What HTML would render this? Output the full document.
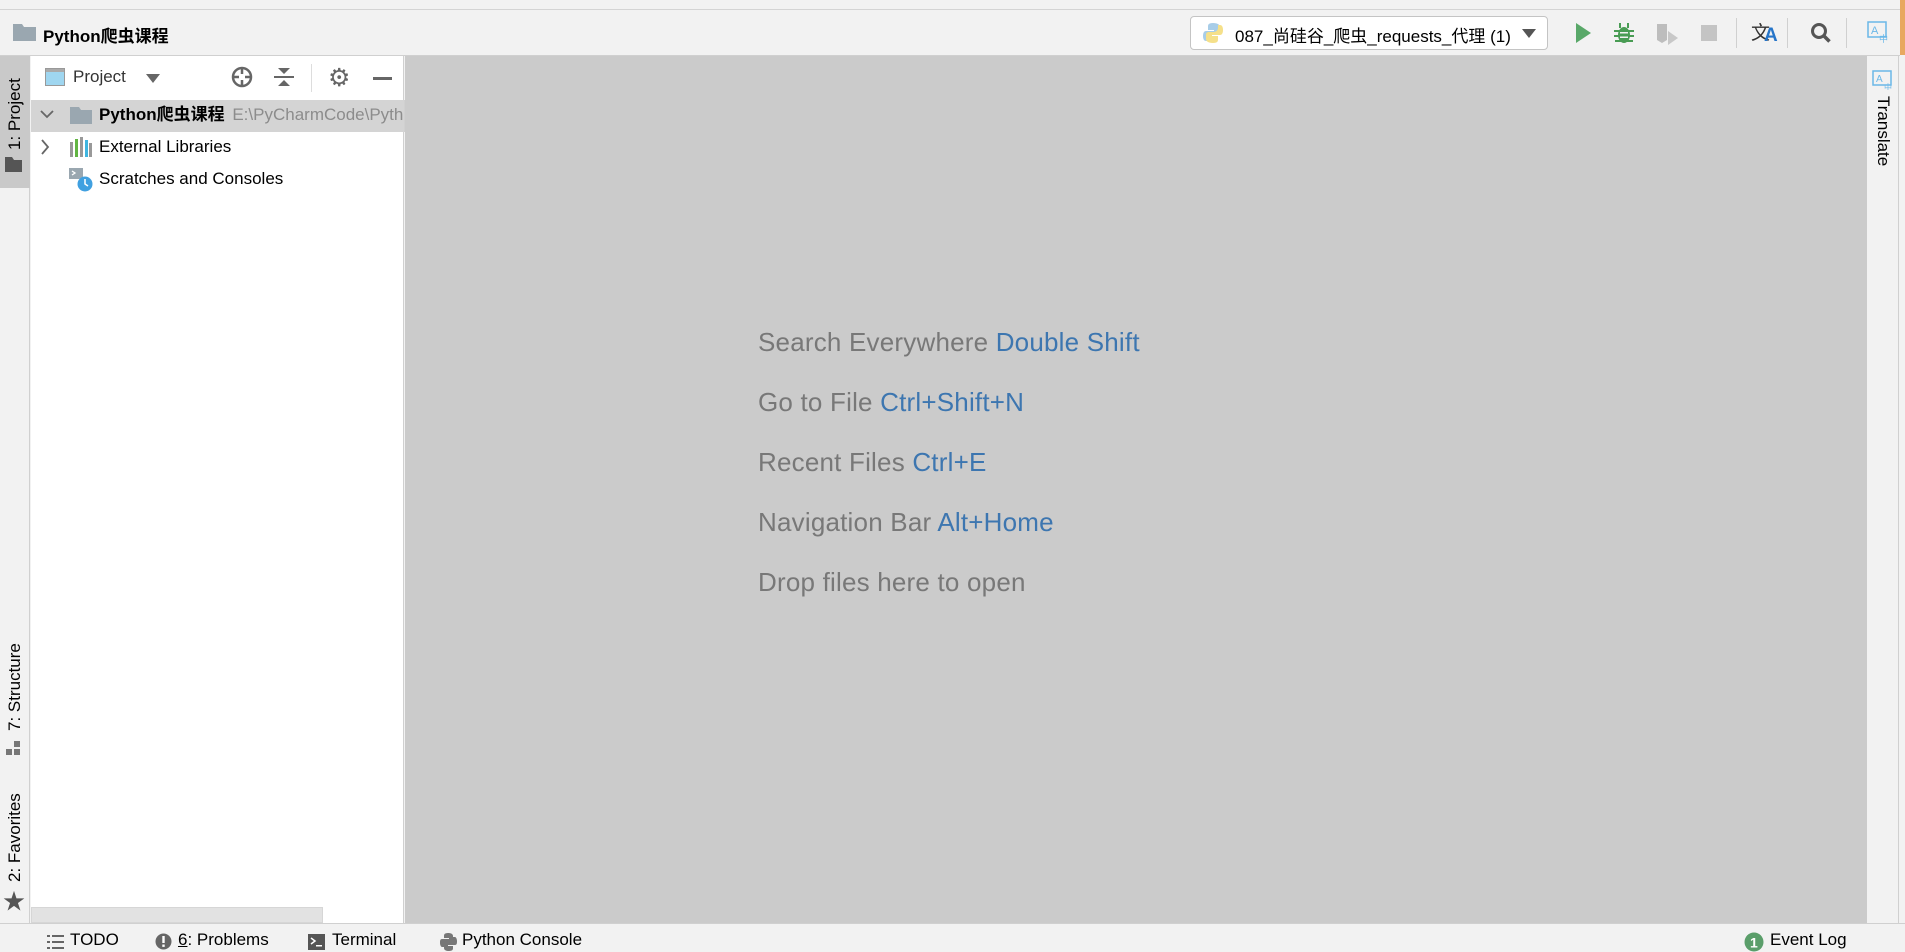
<!DOCTYPE html>
<html><head><meta charset="utf-8"><style>
*{margin:0;padding:0;box-sizing:border-box}
body{width:1905px;height:952px;overflow:hidden;background:#f2f2f2;font-family:"Liberation Sans","Noto Sans CJK SC",sans-serif;position:relative;color:#000}
.a{position:absolute}
.vt{position:absolute;transform:rotate(-90deg);transform-origin:left top;white-space:nowrap;font-size:17px}
.st{position:absolute;top:930px;font-size:17px;white-space:nowrap}
.ct{position:absolute;left:758px;font-size:26px;letter-spacing:0.2px;color:#787878;white-space:nowrap}
.ct b{font-weight:normal;color:#3d76b0}
</style></head><body>
<div class="a" style="left:0;top:9px;width:1905px;height:1px;background:#d4d4d4"></div>
<div class="a" style="left:1900px;top:0;width:5px;height:55px;background:#e8a860"></div>
<!-- title bar -->
<svg class="a" style="left:13px;top:24px" width="23" height="17"><path d="M0 0h9l2 3h12v14H0z" fill="#9aa7b0"/></svg>
<div class="a" style="left:43px;top:22px;font-size:17px;font-weight:bold">Python爬虫课程</div>
<div class="a" style="left:1190px;top:16px;width:358px;height:34px;background:#fff;border:1px solid #c4c4c4;border-radius:4px"></div>
<svg class="a" style="left:1203px;top:22px" width="20" height="22"><path d="M10 1c-5 0-5 2-5 4v3h6v1H3C1 9 0 11 0 14s1 5 3 5h2v-3c0-2 2-4 4-4h5c2 0 3-1 3-3V5c0-2-2-4-7-4z" fill="#a8cde8"/><path d="M10 21c5 0 5-2 5-4v-3H9v-1h8c2 0 3-2 3-5s-1-5-3-5h-2v3c0 2-2 4-4 4H6c-2 0-3 1-3 3v4c0 2 2 4 7 4z" fill="#f5e08a"/></svg>
<div class="a" style="left:1235px;top:22px;font-size:17px;white-space:nowrap">087_尚硅谷_爬虫_requests_代理 (1)</div>
<svg class="a" style="left:1522px;top:29px" width="14" height="9"><path d="M0 0h14L7 9z" fill="#555"/></svg>
<svg class="a" style="left:1575px;top:23px" width="16" height="20"><path d="M1 0l15 10L1 20z" fill="#59a869"/></svg>
<svg class="a" style="left:1613px;top:22px" width="22" height="22"><g fill="#499c54"><ellipse cx="11" cy="13" rx="6" ry="8"/><rect x="1" y="8" width="20" height="2"/><rect x="1" y="13" width="20" height="2"/><rect x="2" y="18" width="18" height="2"/><rect x="6" y="1" width="2" height="5"/><rect x="14" y="1" width="2" height="5"/></g><rect x="7" y="10" width="8" height="1.5" fill="#f2f2f2"/><rect x="7" y="14.5" width="8" height="1.5" fill="#f2f2f2"/></svg>
<svg class="a" style="left:1656px;top:22px" width="24" height="24"><path d="M1 2h10v16l-5 3-5-3z" fill="#bdbdbd"/><path d="M12 9l10 7-10 7z" fill="#c8c8c8"/></svg>
<div class="a" style="left:1701px;top:25px;width:16px;height:16px;background:#c4c4c4"></div>
<div class="a" style="left:1736px;top:18px;width:1px;height:30px;background:#d0d0d0"></div>
<div class="a" style="left:1751px;top:18px;font-size:19px;color:#333;font-family:'Noto Sans CJK SC',sans-serif">文</div>
<div class="a" style="left:1764px;top:25px;font-size:19px;font-weight:bold;color:#2675c9">A</div>
<div class="a" style="left:1787px;top:18px;width:1px;height:30px;background:#d0d0d0"></div>
<svg class="a" style="left:1810px;top:22px" width="22" height="22"><circle cx="9" cy="9" r="6.5" fill="none" stroke="#555" stroke-width="3"/><path d="M13.5 13.5l6 6" stroke="#555" stroke-width="3.5"/></svg>
<div class="a" style="left:1846px;top:18px;width:1px;height:30px;background:#d0d0d0"></div>
<svg class="a" style="left:1867px;top:21px" width="22" height="22"><rect x="1" y="1" width="18" height="15" fill="none" stroke="#6bb8e8" stroke-width="1.5"/><text x="4" y="13" font-size="11" fill="#6bb8e8" font-family="Liberation Sans">A</text><text x="12" y="21" font-size="9" fill="#6bb8e8" font-family="Noto Sans CJK SC">中</text></svg>
<div class="a" style="left:0;top:55px;width:1900px;height:1px;background:#d0d0d0"></div>
<!-- left strip -->
<div class="a" style="left:0;top:56px;width:30px;height:867px;background:#f2f2f2;border-right:1px solid #d0d0d0"></div>
<div class="a" style="left:0;top:56px;width:30px;height:132px;background:#c9c9c9"></div>
<div class="vt" style="left:5px;top:150px">1: Project</div>
<svg class="a" style="left:5px;top:157px" width="17" height="15"><path d="M0 0h7l2 3h8v12H0z" fill="#555"/></svg>
<div class="vt" style="left:5px;top:731px">7: Structure</div>
<svg class="a" style="left:6px;top:741px" width="14" height="14"><rect x="0" y="8" width="6" height="6" fill="#777"/><rect x="8" y="8" width="6" height="6" fill="#777"/><rect x="8" y="0" width="6" height="6" fill="#777"/></svg>
<div class="vt" style="left:5px;top:882px">2: Favorites</div>
<div class="a" style="left:3px;top:884px;font-size:22px;color:#555">★</div>
<!-- project panel -->
<div class="a" style="left:31px;top:56px;width:373px;height:867px;background:#fff;border-right:1px solid #d0d0d0"></div>
<svg class="a" style="left:45px;top:68px" width="20" height="18"><rect x=".5" y=".5" width="19" height="17" fill="#9fd6f0" stroke="#999"/><rect x="1" y="1" width="18" height="3" fill="#aaa"/></svg>
<div class="a" style="left:73px;top:67px;font-size:17px;color:#333">Project</div>
<svg class="a" style="left:146px;top:74px" width="14" height="9"><path d="M0 0h14L7 9z" fill="#666"/></svg>
<svg class="a" style="left:231px;top:66px" width="22" height="22"><circle cx="11" cy="11" r="9" fill="none" stroke="#666" stroke-width="2.5"/><path d="M11 1v7M11 14v7M1 11h7M14 11h7" stroke="#666" stroke-width="2.5"/></svg>
<svg class="a" style="left:274px;top:66px" width="20" height="22"><path d="M0 11h20" stroke="#666" stroke-width="2"/><path d="M4 2h12L10 8z M4 20h12L10 14z" fill="#666"/></svg>
<div class="a" style="left:311px;top:64px;width:1px;height:28px;background:#ddd"></div>
<div class="a" style="left:328px;top:63px;font-size:25px;color:#666">⚙</div>
<div class="a" style="left:373px;top:77px;width:19px;height:3px;background:#666"></div>
<div class="a" style="left:31px;top:100px;width:373px;height:32px;background:#d4d4d4"></div>
<svg class="a" style="left:40px;top:110px" width="14" height="10"><path d="M1 1l6 6 6-6" fill="none" stroke="#666" stroke-width="1.8"/></svg>
<svg class="a" style="left:70px;top:107px" width="22" height="17"><path d="M0 0h9l2 3h11v14H0z" fill="#9aa7b0"/></svg>
<div class="a" style="left:99px;top:105px;font-size:17px;font-weight:bold;white-space:nowrap;line-height:20px">Python爬虫课程 <span style="font-weight:normal;color:#8c8c8c;margin-left:3px">E:\PyCharmCode\Pyth</span></div>
<div class="a" style="left:404px;top:100px;width:1px;height:32px;background:#d0d0d0"></div>
<svg class="a" style="left:40px;top:139px" width="10" height="16"><path d="M2 1l6 7-6 7" fill="none" stroke="#666" stroke-width="1.8"/></svg>
<svg class="a" style="left:70px;top:137px" width="22" height="20"><rect x="0" y="5" width="3" height="15" fill="#999"/><rect x="5" y="2" width="3" height="18" fill="#62b543"/><rect x="10" y="0" width="3" height="20" fill="#999"/><rect x="15" y="3" width="3" height="17" fill="#40b6e0"/><rect x="19" y="6" width="3" height="14" fill="#999"/></svg>
<div class="a" style="left:99px;top:137px;font-size:17px">External Libraries</div>
<svg class="a" style="left:69px;top:168px" width="24" height="24"><rect x="0" y="0" width="14" height="11" fill="#9aa7b0"/><path d="M3 3l3 2-3 2" fill="none" stroke="#fff" stroke-width="1.3"/><circle cx="16" cy="16" r="7.5" fill="#40a0e0"/><path d="M16 11v5l3 2" fill="none" stroke="#fff" stroke-width="1.5"/></svg>
<div class="a" style="left:99px;top:169px;font-size:17px">Scratches and Consoles</div>
<div class="a" style="left:31px;top:907px;width:292px;height:16px;background:#e2e2e2;border:1px solid #d6d6d6"></div>
<!-- editor -->
<div class="a" style="left:405px;top:56px;width:1462px;height:867px;background:#cbcbcb"></div>
<div class="ct" style="top:327px">Search Everywhere <b>Double Shift</b></div>
<div class="ct" style="top:387px">Go to File <b>Ctrl+Shift+N</b></div>
<div class="ct" style="top:447px">Recent Files <b>Ctrl+E</b></div>
<div class="ct" style="top:507px">Navigation Bar <b>Alt+Home</b></div>
<div class="ct" style="top:567px">Drop files here to open</div>
<!-- right strip -->
<div class="a" style="left:1867px;top:56px;width:32px;height:867px;background:#f2f2f2;border-right:1px solid #d0d0d0"></div>
<svg class="a" style="left:1872px;top:70px" width="22" height="20"><rect x="1" y="1" width="18" height="14" fill="none" stroke="#6bb8e8" stroke-width="1.5"/><text x="4" y="12" font-size="10" fill="#6bb8e8" font-family="Liberation Sans">A</text><text x="12" y="20" font-size="8" fill="#6bb8e8" font-family="Noto Sans CJK SC">中</text></svg>
<div class="vt" style="left:1893px;top:96px;transform:rotate(90deg)">Translate</div>
<!-- status bar -->
<div class="a" style="left:0;top:923px;width:1905px;height:1px;background:#d0d0d0"></div>
<svg class="a" style="left:47px;top:935px" width="17" height="14"><g fill="#666"><rect x="0" y="0" width="3" height="2"/><rect x="5" y="0" width="12" height="2"/><rect x="0" y="6" width="3" height="2"/><rect x="5" y="6" width="12" height="2"/><rect x="0" y="12" width="3" height="2"/><rect x="5" y="12" width="12" height="2"/></g></svg>
<div class="st" style="left:70px">TODO</div>
<svg class="a" style="left:155px;top:933px" width="17" height="17"><circle cx="8.5" cy="8.5" r="8" fill="#666"/><rect x="7.3" y="3" width="2.4" height="7" fill="#fff"/><rect x="7.3" y="11.5" width="2.4" height="2.4" fill="#fff"/></svg>
<div class="st" style="left:178px"><u>6</u>: Problems</div>
<svg class="a" style="left:308px;top:934px" width="17" height="16"><rect width="17" height="16" fill="#555"/><path d="M3 4l4 3-4 3" fill="none" stroke="#fff" stroke-width="1.5"/><rect x="8" y="11" width="6" height="1.5" fill="#fff"/></svg>
<div class="st" style="left:332px">Terminal</div>
<svg class="a" style="left:440px;top:933px" width="17" height="18"><path d="M8 0c-4 0-4 2-4 3v2h5v1H2C0 6 0 8 0 10s1 4 2 4h2v-2c0-2 1-3 3-3h4c1 0 2-1 2-2V3c0-2-2-3-5-3z M9 18c4 0 4-2 4-3v-2H8v-1h7c2 0 2-2 2-4s-1-4-2-4h-2v2c0 2-1 3-3 3H6c-1 0-2 1-2 2v4c0 2 2 3 5 3z" fill="#777"/></svg>
<div class="st" style="left:462px">Python Console</div>
<svg class="a" style="left:1744px;top:932px" width="20" height="20"><circle cx="10" cy="10" r="9.5" fill="#5a9e6a"/><text x="6" y="15.5" font-size="14" font-weight="bold" fill="#fff" font-family="Liberation Sans">1</text></svg>
<div class="st" style="left:1770px">Event Log</div>
</body></html>
